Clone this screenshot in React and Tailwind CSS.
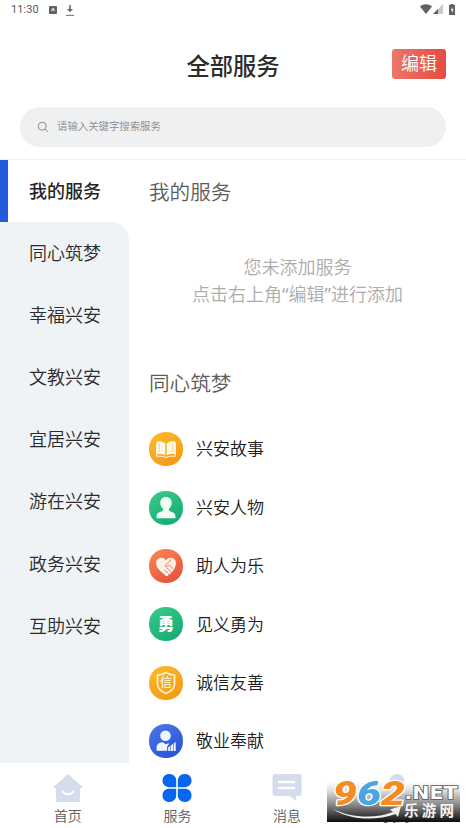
const categories = ["我的服务", "同心筑梦", "幸福兴安", "文教兴安", "宜居兴安", "游在兴安", "政务兴安", "互助兴安"];

const services = [
  { name: "兴安故事", from: "#fcbc2b", to: "#f39c16", icon: <BookIcon /> },
  { name: "兴安人物", from: "#3acb8b", to: "#18ad76", icon: <PersonIcon /> },
  { name: "助人为乐", from: "#fb8a50", to: "#e9533f", icon: <HeartIcon /> },
  { name: "见义勇为", from: "#3acb8b", to: "#18ad76", icon: <BraveIcon /> },
  { name: "诚信友善", from: "#fcbc2b", to: "#f39c16", icon: <ShieldIcon /> },
  { name: "敬业奉献", from: "#4a79ea", to: "#2b55d6", icon: <WorkerIcon /> },
];

function BookIcon() {
  return (
    <g>
      <path d="M8 9.300c3-.4 5.800.2 8.300 1.900v12.300c-2.500-1.300-5.300-1.700-8.300-1.300zM26 9.300c-3-.4-5.800.2-8.300 1.900v12.300c2.500-1.300 5.300-1.700 8.300-1.300z" fill="#fff8e6" />
      <path d="M7.500 10.500v13.700c3.700-.2 6.500 0 9.500 1.300 3-1.300 5.800-1.500 9.500-1.300V10.500" fill="none" stroke="#fff8e6" strokeWidth="1" />
      <path d="M10.200 11.500v8.300M23.800 11.500v8.300" stroke="#fbc95b" strokeWidth=".8" />
    </g>
  );
}

function PersonIcon() {
  return (
    <path
      d="M17 6c3.600 0 5.700 2.400 5.700 5.800 0 2.700-1.200 4.900-2.700 6v1.800c0 1 5.800 1.700 6.300 4.400.2 1 .2 2.100.2 3.200h-19c0-1.100 0-2.200.2-3.200.5-2.700 6.300-3.400 6.300-4.400v-1.800c-1.500-1.100-2.700-3.300-2.700-6C11.300 8.400 13.400 6 17 6z"
      fill="#effff6"
    />
  );
}

function HeartIcon() {
  return (
    <g>
      <path d="M17 11.200c-2.300-3.900-9.900-3.200-9.900 2.700 0 4.500 3.400 7.300 6.600 10 1.600 1.600 3.500 3.600 5 3.100 1.200-.4.600-1.800.6-1.800s2.300.6 2.300-1.200c1.500-1 5.300-4.700 5.300-10.100 0-5.900-7.600-6.600-9.900-2.700z" fill="#fff1e9" />
      <path d="M22.300 10.500l-6.300 6.300c1.500 1.400 3 .4 4.200-.8l3.800 3.700M17.500 18.500l4.300 4M15.300 20.500l3.900 3.900" fill="none" stroke="#ef6847" strokeWidth=".9" />
    </g>
  );
}

function BraveIcon() {
  return (
    <text x="17" y="23.200" textAnchor="middle" fontSize="16.500" fill="#fff" className="font-['Noto_Sans_CJK_SC',sans-serif] font-black">
      勇
    </text>
  );
}

function ShieldIcon() {
  return (
    <g>
      <path d="M17 6.500c2.700 1.800 5.300 2.500 8.500 2.700v9c0 4.400-4.100 7.300-8.500 9.300-4.400-2-8.500-4.900-8.500-9.300v-9c3.200-.2 5.800-.9 8.500-2.700z" fill="none" stroke="#fff2cf" strokeWidth="1.700" />
      <text x="17" y="21.200" textAnchor="middle" fontSize="12" fill="#fff2cf" className="font-['Noto_Sans_CJK_SC',sans-serif] font-medium">
        信
      </text>
    </g>
  );
}

function WorkerIcon() {
  return (
    <g fill="#eff4ff">
      <circle cx="16.500" cy="11.800" r="5.300" />
      <path d="M7.600 26.800v-3.300c0-3.500 2.300-5 6-5.300l3.300 2 2-.8c.4 0 .8.100 1.200.300l-2 3v4.100z" />
      <path d="M19.200 23.200l2.200-1.500v5.300h-2.200zM22 21.200l2.200-1.500V27H22zM24.800 19.300l1.900-1.300v9h-1.900z" />
    </g>
  );
}

function ServiceRow({ id, service }) {
  return (
    <li className="flex h-[58.4px] items-center gap-[13px]">
      <svg className="size-[34px] shrink-0" viewBox="0 0 34 34">
        <defs>
          <linearGradient id={id} x1="0" y1="0" x2="0.600" y2="1">
            <stop offset="0" stopColor={service.from} />
            <stop offset="1" stopColor={service.to} />
          </linearGradient>
        </defs>
        <path d="M17 0C27.200 0 34 6.800 34 17S27.200 34 17 34 0 27.200 0 17 6.800 0 17 0z" fill={`url(#${id})`} />
        {service.icon}
      </svg>
      <span className="text-[17px] text-[#202020]">{service.name}</span>
    </li>
  );
}

function StatusBar() {
  return (
    <div className="flex h-5 items-center justify-between pr-[11px] pl-[11px] text-[#5c5c5c]">
      <div className="flex items-center">
        <span className="w-[38px] font-[Roboto,sans-serif] text-[11px] leading-5 font-normal tracking-[0.1px]">11:30</span>
        <svg className="size-2" viewBox="0 0 8 8">
          <rect width="8" height="8" rx="1" fill="#606060" />
          <path d="M2 6l.8-3.200L4 1.500l1.300 1.300L6 6 4.500 4.500H3.300z" fill="#ddd" />
        </svg>
        <svg className="ml-[9px] h-[11px] w-2" viewBox="0 0 8 11">
          <path d="M4 0v5" fill="none" stroke="#686868" strokeWidth="1.600" />
          <path d="M1 4h6L4 7.300z" fill="#686868" />
          <path d="M0 10.300h8" stroke="#686868" strokeWidth="1" />
        </svg>
      </div>
      <div className="mt-[-2px] flex items-center">
        <svg className="h-[10px] w-[12px]" viewBox="0 0 12 10">
          <path d="M0 2.500C3.500-.6 8.500-.6 12 2.500L6 10z" fill="#606060" />
        </svg>
        <svg className="ml-[1px] size-[10px]" viewBox="0 0 10 10">
          <path d="M10 0v10H0z" fill="#c9c9c9" />
          <path d="M5 5v5H0z" fill="#606060" />
        </svg>
        <svg className="ml-[6px] h-[11px] w-[6px]" viewBox="0 0 6 11">
          <path d="M1.500 1V0h3v1H6v10H0V1z" fill="#606060" />
          <path d="M3.500 3L1.700 6.200h1.200V9l1.700-3.500H3.400z" fill="#fff" />
        </svg>
      </div>
    </div>
  );
}

function NavItem({ label, children }) {
  return (
    <button className="flex w-[109.600px] flex-col items-center pt-[9px]">
      <svg className="h-[32px] w-[30px]" viewBox="0 0 30 32">
        {children}
      </svg>
      <span className="mt-[2px] text-[14px] leading-5 text-[#5c5c5c]">{label}</span>
    </button>
  );
}

function SiteLogo() {
  return (
    <svg className="absolute top-[15px] left-[327px] h-[44px] w-[133px] overflow-visible" viewBox="0 0 133 44">
      <defs>
        <linearGradient id="plate" x1="0" y1="0" x2="0" y2="1">
          <stop offset="0" stopColor="#fff" />
          <stop offset=".2" stopColor="#e2e2e2" />
          <stop offset=".6" stopColor="#808080" />
          <stop offset="1" stopColor="#0c0c0c" />
        </linearGradient>
      </defs>
      <rect y="4" width="133" height="40" fill="url(#plate)" />
      <g fontSize="34" stroke="#fff" strokeWidth="2.500" paintOrder="stroke" strokeLinejoin="round" className="font-[Roboto,sans-serif] font-black italic">
        <text transform="translate(6 27) scale(1.250 1)" fill="#f68b1f">
          9
        </text>
        <text transform="translate(30 27) scale(1.250 1)" fill="#4aa5e3">
          6
        </text>
        <text transform="translate(54 27) scale(1.250 1)" fill="#f68b1f">
          2
        </text>
      </g>
      <text x="77.500" y="20.500" fontSize="17" textLength="53" lengthAdjust="spacingAndGlyphs" fill="#fff" stroke="#555" strokeWidth="1.500" paintOrder="stroke" className="font-['DejaVu_Sans',sans-serif] font-bold">
        .NET
      </text>
      <text x="77" y="38" fontSize="14.500" textLength="50" fill="#f4f4f4" className="font-['Noto_Sans_CJK_SC',sans-serif] font-bold">
        乐游网
      </text>
      <path d="M6 31c18 9 42 10 60 3l-3-2.500 11-3.500-3 11-2.500-3C47 44 20 41 6 31z" fill="#eee" />
    </svg>
  );
}

function TabBar() {
  return (
    <nav className="relative flex h-[65px] shrink-0 bg-white pl-[13px]">
      <NavItem label="首页">
        <path d="M15 2L.8 14.500c-.5.500-.2 1.500.7 1.500H3v12.500c0 1 .6 1.500 1.500 1.500h21c.9 0 1.500-.5 1.500-1.500V16h1.500c.9 0 1.200-1 .7-1.500z" fill="#d5dceb" />
        <path d="M9.500 19.500c2 3.500 9 3.500 11 0" fill="none" stroke="#fff" strokeWidth="2" strokeLinecap="round" />
      </NavItem>
      <NavItem label="服务">
        <g fill="#0866ee">
          <path d="M7.300 2c4 0 6.900 2.800 6.900 6.700v6.500H7.300C3.300 15.200.5 12.500.5 8.600S3.400 2 7.300 2z" />
          <path d="M22.700 2c-4 0-6.900 2.800-6.900 6.700v6.500h6.900c4 0 6.800-2.700 6.800-6.600S26.600 2 22.700 2z" />
          <path d="M7.300 30c4 0 6.900-2.800 6.900-6.700v-6.500H7.300c-4 0-6.800 2.700-6.800 6.600S3.400 30 7.300 30z" />
          <path d="M22.700 30c-4 0-6.900-2.800-6.900-6.700v-6.500h6.900c4 0 6.800 2.700 6.800 6.600S26.600 30 22.700 30z" />
        </g>
      </NavItem>
      <NavItem label="消息">
        <path d="M3 2h24c1.500 0 2.500 1 2.500 2.500v17c0 1.500-1 2.500-2.500 2.500h-3v5l-6-5H3C1.500 24 .5 23 .5 21.500v-17C.5 3 1.500 2 3 2z" fill="#d5dceb" />
        <path d="M6 10h17M6 16h17" stroke="#fff" strokeWidth="2.500" />
      </NavItem>
      <NavItem label="我的">
        <circle cx="15" cy="9.500" r="7.500" fill="#d5dceb" />
      </NavItem>
      <SiteLogo />
    </nav>
  );
}

export default function App() {
  return (
    <div className="flex h-[828px] w-[466px] flex-col overflow-hidden bg-white font-['Noto_Sans','Noto_Sans_CJK_SC',sans-serif] font-[350]">
      <StatusBar />
      <header className="grid h-[87px] shrink-0 grid-cols-[1fr_auto_1fr] items-center">
        <h1 className="col-start-2 mt-[5px] text-[23.3px] leading-8 font-medium text-[#2c2c2c]">全部服务</h1>
        <button className="mr-5 flex h-[30px] w-[54px] items-center justify-center justify-self-end rounded-[3px] bg-linear-to-r from-[#ec7569] to-[#e34c42] pb-[2px] text-[18px] leading-none text-white">
          编辑
        </button>
      </header>

      <div className="shrink-0 border-b border-[#f0f1f3] px-5 pb-3">
        <div className="flex h-10 items-center gap-2 rounded-full bg-[#eff0f2] pl-[17px] text-[10.4px] text-[#8b8b8e]">
          <svg className="size-3" viewBox="0 0 12 12" fill="none" stroke="currentColor">
            <circle cx="5.200" cy="5.200" r="4" />
            <path d="M8.200 8.200l2.800 2.600" />
          </svg>
          请输入关键字搜索服务
        </div>
      </div>

      <div className="flex min-h-0 flex-1">
        <aside className="w-[129px] shrink-0">
          <div className="flex h-[62px] items-center border-l-8 border-[#245bd8] pl-[21px] text-[18px] font-medium text-[#252525]">{categories[0]}</div>
          <ul className="h-full rounded-tr-[18px] bg-[#eff3f6]">
            {categories.slice(1).map((name) => (
              <li key={name} className="flex h-[62.200px] items-center pl-[29px] text-[18px] text-[#2b2b2b]">
                {name}
              </li>
            ))}
          </ul>
        </aside>

        <main className="min-w-0 flex-1 overflow-hidden pl-5">
          <h2 className="pt-4 text-[20.600px] leading-8 text-[#5c5c5c]">我的服务</h2>
          <p className="mt-[46px] pr-5 text-center text-[18px] leading-[27px] text-[#acacac]">
            您未添加服务
            <br />
            点击右上角<span className="font-normal">“</span>编辑<span className="font-normal">”</span>进行添加
          </p>
          <h2 className="mt-[59px] text-[20.600px] leading-8 text-[#5c5c5c]">同心筑梦</h2>
          <ul className="mt-[21px]">
            {services.map((service, i) => (
              <ServiceRow key={service.name} id={`service-${i}`} service={service} />
            ))}
          </ul>
        </main>
      </div>

      <TabBar />
    </div>
  );
}
